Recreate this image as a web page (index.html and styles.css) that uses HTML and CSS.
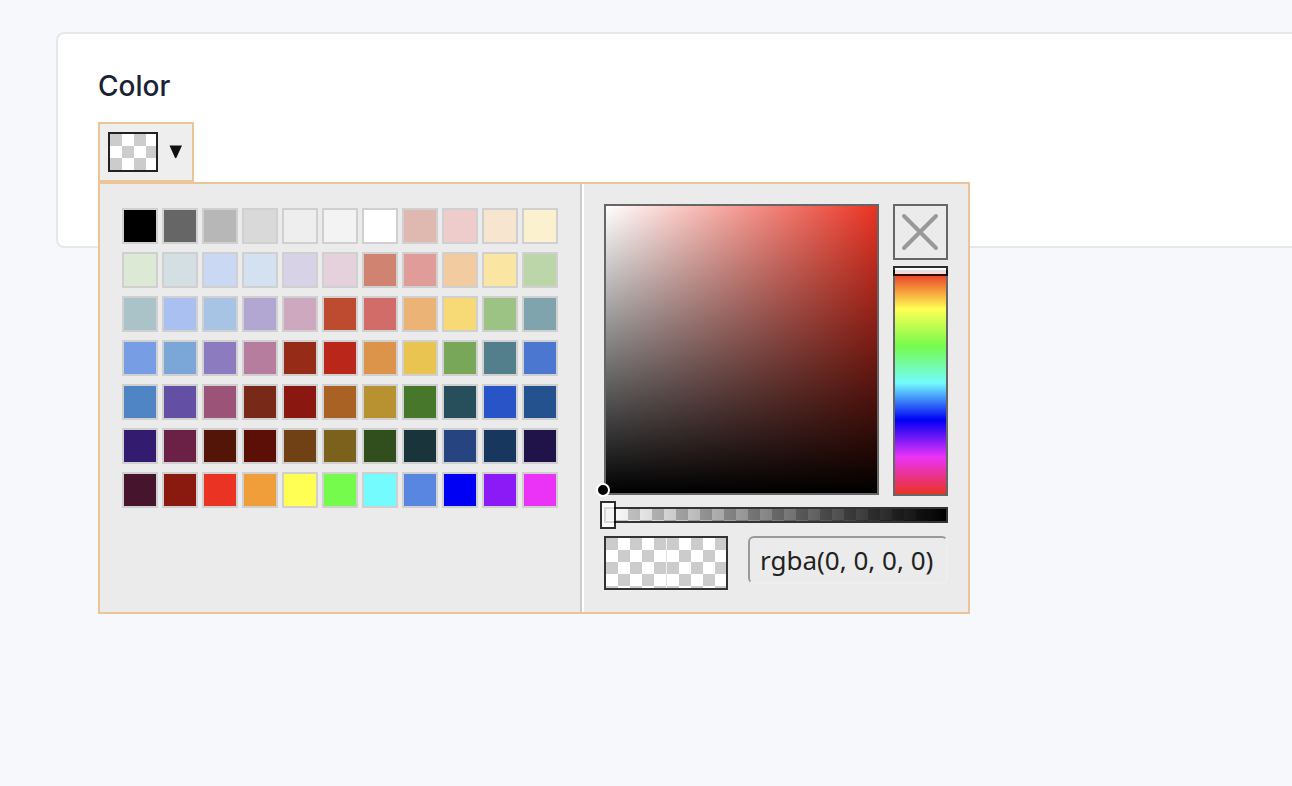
FILE: index.html
```
<!DOCTYPE html>
<html lang="en">
<head>
<meta charset="utf-8">
<meta name="viewport" content="width=device-width, initial-scale=1">
<title>Color</title>
<link rel="stylesheet" href="styles.css">
</head>
<body>
<main class="card">
  <label class="field-label" for="trigger">Color</label>
  <div class="picker">
    <button class="trigger" id="trigger" type="button" aria-expanded="true" aria-controls="popover">
      <span class="trigger-preview checker"></span>
      <svg class="arrow" viewBox="0 0 14 14" aria-hidden="true"><path d="M.5 .5h12.500L7.500 12.600q-.8 1.400-1.600 0z"/></svg>
    </button>
    <div class="popover" id="popover">
      <div class="palette" id="palette" role="group" aria-label="Palette"></div>
      <div class="editor">
        <div class="spectrum">
          <div class="shade"><span class="handle"></span></div>
          <div class="side">
            <button class="clear" type="button" aria-label="Clear color">
              <svg class="cross" viewBox="0 0 40 40" aria-hidden="true"><path d="M3 4 35 36M35 4 3 36"/></svg>
            </button>
            <div class="track hue">
              <input class="slider hue-slider" type="range" min="0" max="360" value="0" aria-label="Hue">
            </div>
          </div>
        </div>
        <div class="track alpha">
          <input class="slider alpha-slider" type="range" min="0" max="100" value="0" aria-label="Opacity">
        </div>
        <div class="result">
          <div class="compare"><span class="half checker"></span><span class="half checker"></span></div>
          <input class="value" type="text" value="rgba(0, 0, 0, 0)" spellcheck="false" aria-label="Color value">
        </div>
      </div>
    </div>
  </div>
</main>
<script src="app.js"></script>
</body>
</html>
```
FILE: styles.css
```
* { box-sizing: border-box; }

body {
  margin: 0;
  padding: 32px 0 0 56px;
  min-height: 100vh;
  background: #f7f8fc;
  color: #1a2233;
  font-family: Inter, "Liberation Sans", sans-serif;
}

button, input { margin: 0; font: inherit; color: inherit; }
button { padding: 0; cursor: pointer; }

.card {
  padding: 32px 40px 64px;
  background: #fff;
  border: 2px solid #e6e7eb;
  border-right: 0;
  border-radius: 8px 0 0 8px;
}

.field-label {
  display: block;
  margin-bottom: 16px;
  font-size: 28px;
  font-weight: 500;
  line-height: 40px;
}

.picker { position: relative; }

.checker {
  background: repeating-conic-gradient(#fff 0 25%, #ccc 0 50%) 0 0 / 24px 24px;
}

.trigger {
  display: flex;
  align-items: center;
  gap: 11px;
  width: 96px;
  height: 60px;
  padding: 8px;
  background: #eee;
  border: 2px solid #ebc499;
}

.trigger-preview {
  width: 50px;
  height: 40px;
  border: 2px solid #222;
}

.arrow { width: 14px; height: 14px; fill: #111; }

.popover {
  position: absolute;
  top: 100%;
  left: 0;
  display: flex;
  background: #ebebeb;
  border: 2px solid #ebc499;
}

.palette {
  display: grid;
  grid-template-columns: repeat(11, 36px);
  grid-auto-rows: 36px;
  gap: 8px 4px;
  padding: 24px 22px;
}

.swatch { border: 2px solid #d0d0d0; }

.editor {
  padding: 20px 20px 22px;
  border-left: 2px solid #fff;
  box-shadow: -2px 0 #ccc;
  margin-left: 2px;
}

.spectrum { display: flex; align-items: flex-start; gap: 14px; }

.shade {
  position: relative;
  width: 275px;
  height: 291px;
  border: 2px solid #666;
  background: linear-gradient(to top, #000, transparent), linear-gradient(to right, #fff, #ea3323);
}

.handle {
  position: absolute;
  left: -10px;
  bottom: -4px;
  width: 14px;
  height: 14px;
  background: #000;
  border: 2px solid #fff;
  border-radius: 50%;
}

.side { display: flex; flex-direction: column; gap: 10px; width: 55px; }

.clear {
  display: grid;
  place-items: center;
  height: 56px;
  background: none;
  border: 2px solid #666;
}

.cross {
  width: 40px;
  height: 40px;
  fill: none;
  stroke: #999;
  stroke-width: 4;
  stroke-linecap: round;
}

.track { position: relative; border: 2px solid #333; }

.hue {
  height: 226px;
  border-color: #666;
  background: linear-gradient(#ea3323, #ffff54, #75fb4c, #73fbfd, #0000f5, #ea33f7, #ea3323);
}

.alpha {
  height: 16px;
  margin: 11px 0 13px;
  background:
    linear-gradient(to right, transparent, #000),
    repeating-conic-gradient(#fff 0 25%, #ccc 0 50%) -2px -1px / 24px 24px;
}

.slider {
  position: absolute;
  margin: 0;
  appearance: none;
  background: none;
  outline: 0;
}

.hue-slider { writing-mode: vertical-lr; left: -2px; top: -6px; width: 55px; height: 234px; }
.alpha-slider { left: -6px; top: -8px; width: calc(100% + 12px); height: 28px; }

.slider::-webkit-slider-thumb {
  appearance: none;
  background: #fff;
  border: 2px solid #000;
  opacity: .8;
}

.hue-slider::-webkit-slider-thumb { width: 55px; height: 10px; }
.alpha-slider::-webkit-slider-thumb { width: 16px; height: 28px; }

.result { display: flex; align-items: flex-start; gap: 20px; }

.compare { display: flex; width: 124px; height: 54px; border: 2px solid #333; }
.half { flex: 1; }
.half + .half { border-left: 1px solid rgba(235, 235, 235, .6); }

.value {
  flex: 1;
  min-width: 0;
  width: 200px;
  height: 48px;
  padding: 0 10px;
  color: #222;
  background: transparent;
  border: 2px solid;
  border-color: #999 #eee #eee #999;
  border-radius: 6px;
  font-family: "Noto Sans", sans-serif;
  font-size: 26px;
}
```
FILE: app.js
```
const rows = [
  "000000 666666 b7b7b7 d9d9d9 eeeeee f3f3f3 ffffff dfb9b0 edcccb f8e5d0 fcf1cf",
  "dce9d5 d3dfe3 cad8f4 d3e1f1 d8d2e6 e5d1dc d08370 df9c99 f2cba0 fae6a2 bcd6a9",
  "a9c3c9 a9c0f0 a7c4e5 b2a7d3 cea8be be4a30 d16c69 ecb376 f7d976 9dc384 7fa4ae",
  "779de5 7ba6d8 8c7cbf b77d9f 962b17 ba261a db944a e9c451 78a75a 527f8b 4b77d1",
  "4f85c4 634fa3 9b5377 792917 8b1810 a96224 b89230 47772b 274f5b 2854c7 24528f",
  "331c6f 6b2146 521507 5b0f07 704115 7b611c 304f1c 1a343c 26447f 18375f 1f134a",
  "46152d 8a1a10 ea3323 f09e39 ffff54 75fb4c 73fbfd 5886e1 0000f5 8c1af6 ea33f7"
];

const palette = document.getElementById("palette");
for (const hex of rows.join(" ").split(" ")) {
  const swatch = document.createElement("button");
  swatch.type = "button";
  swatch.className = "swatch";
  swatch.style.backgroundColor = "#" + hex;
  swatch.setAttribute("aria-label", "#" + hex);
  palette.append(swatch);
}
```
